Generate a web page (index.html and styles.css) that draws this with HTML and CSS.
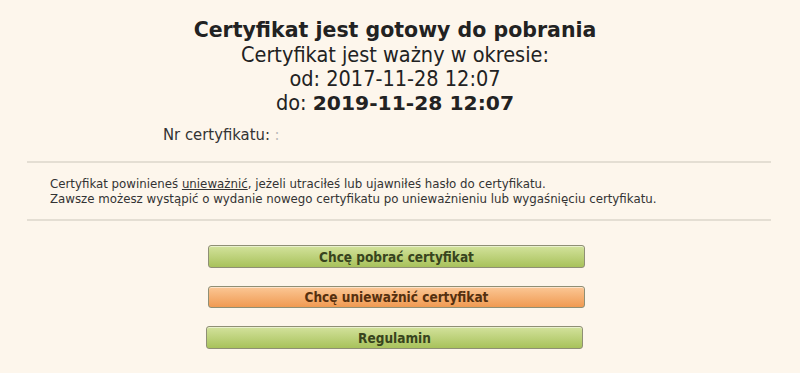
FILE: index.html
```html
<!DOCTYPE html>
<html lang="pl">
<head>
    <meta charset="UTF-8">
    <title>Certyfikat</title>
    <link rel="stylesheet" href="styles.css">
</head>
<body>
    <div class="page">
        <div class="summary">
            <h1 class="title">Certyfikat jest gotowy do pobrania</h1>
            <div class="period">Certyfikat jest ważny w okresie:</div>
            <div class="period">od: 2017-11-28 12:07</div>
            <div class="period">do: <b>2019-11-28 12:07</b></div>
            <div class="cert-nr">Nr certyfikatu: <span class="cert-val">:</span></div>
        </div>

        <div class="notice">
            Certyfikat powinieneś <a href="#">unieważnić</a>, jeżeli utraciłeś lub ujawniłeś hasło do certyfikatu.<br>
            Zawsze możesz wystąpić o wydanie nowego certyfikatu po unieważnieniu lub wygaśnięciu certyfikatu.
        </div>

        <div class="actions">
            <button type="button" class="btn btn-green">Chcę pobrać certyfikat</button>
            <button type="button" class="btn btn-orange">Chcę unieważnić certyfikat</button>
            <button type="button" class="btn btn-green btn-rules">Regulamin</button>
        </div>
    </div>
</body>
</html>
```

FILE: styles.css
```css
body {
    margin: 0;
    background-color: #fdf6ec;
    color: #222;
    font-family: "DejaVu Sans Condensed", "DejaVu Sans", sans-serif;
}

.page {
    width: 744px;
    margin-left: 27px;
}

.summary {
    padding-top: 18px;
    padding-right: 8px;
    padding-bottom: 16px;
    text-align: center;
}

.title {
    margin: 0;
    font-family: "DejaVu Sans", sans-serif;
    font-size: 20.5px;
    line-height: 25px;
    font-weight: bold;
    color: #222;
}

.period {
    font-size: 21.5px;
    line-height: 24px;
}

.period b {
    font-family: "DejaVu Sans", sans-serif;
    font-size: 20.3px;
    font-weight: bold;
}

.cert-nr {
    text-align: left;
    padding-left: 136px;
    margin-top: 10px;
    font-size: 16.5px;
    line-height: 20px;
    color: #333;
}

.cert-val {
    color: #bbb;
}

.notice {
    border-top: 2px solid #e4ded3;
    border-bottom: 2px solid #e4ded3;
    padding: 14px 23px 12px;
    font-family: "DejaVu Sans", sans-serif;
    font-size: 11.8px;
    line-height: 15px;
    color: #333;
}

.notice a {
    color: #333;
    text-decoration: underline;
}

.actions {
    display: flex;
    flex-direction: column;
    align-items: center;
    padding-top: 24px;
    gap: 18px;
}

.btn {
    width: 377px;
    height: 23px;
    margin-left: -5px;
    border: 1px solid #8f8f75;
    border-radius: 3px;
    font-family: "DejaVu Sans Condensed", "DejaVu Sans", sans-serif;
    font-size: 13.5px;
    font-weight: bold;
    padding: 0;
    box-shadow: inset 0 1px 0 rgba(255, 255, 255, 0.5);
}

.btn-green {
    background: linear-gradient(#d3e29c, #a8c25b);
    color: #38441d;
}

.btn-orange {
    height: 22px;
    background: linear-gradient(#fbc795, #f09a52);
    color: #55300f;
}

.btn-rules {
    margin-left: -9px;
}
```
